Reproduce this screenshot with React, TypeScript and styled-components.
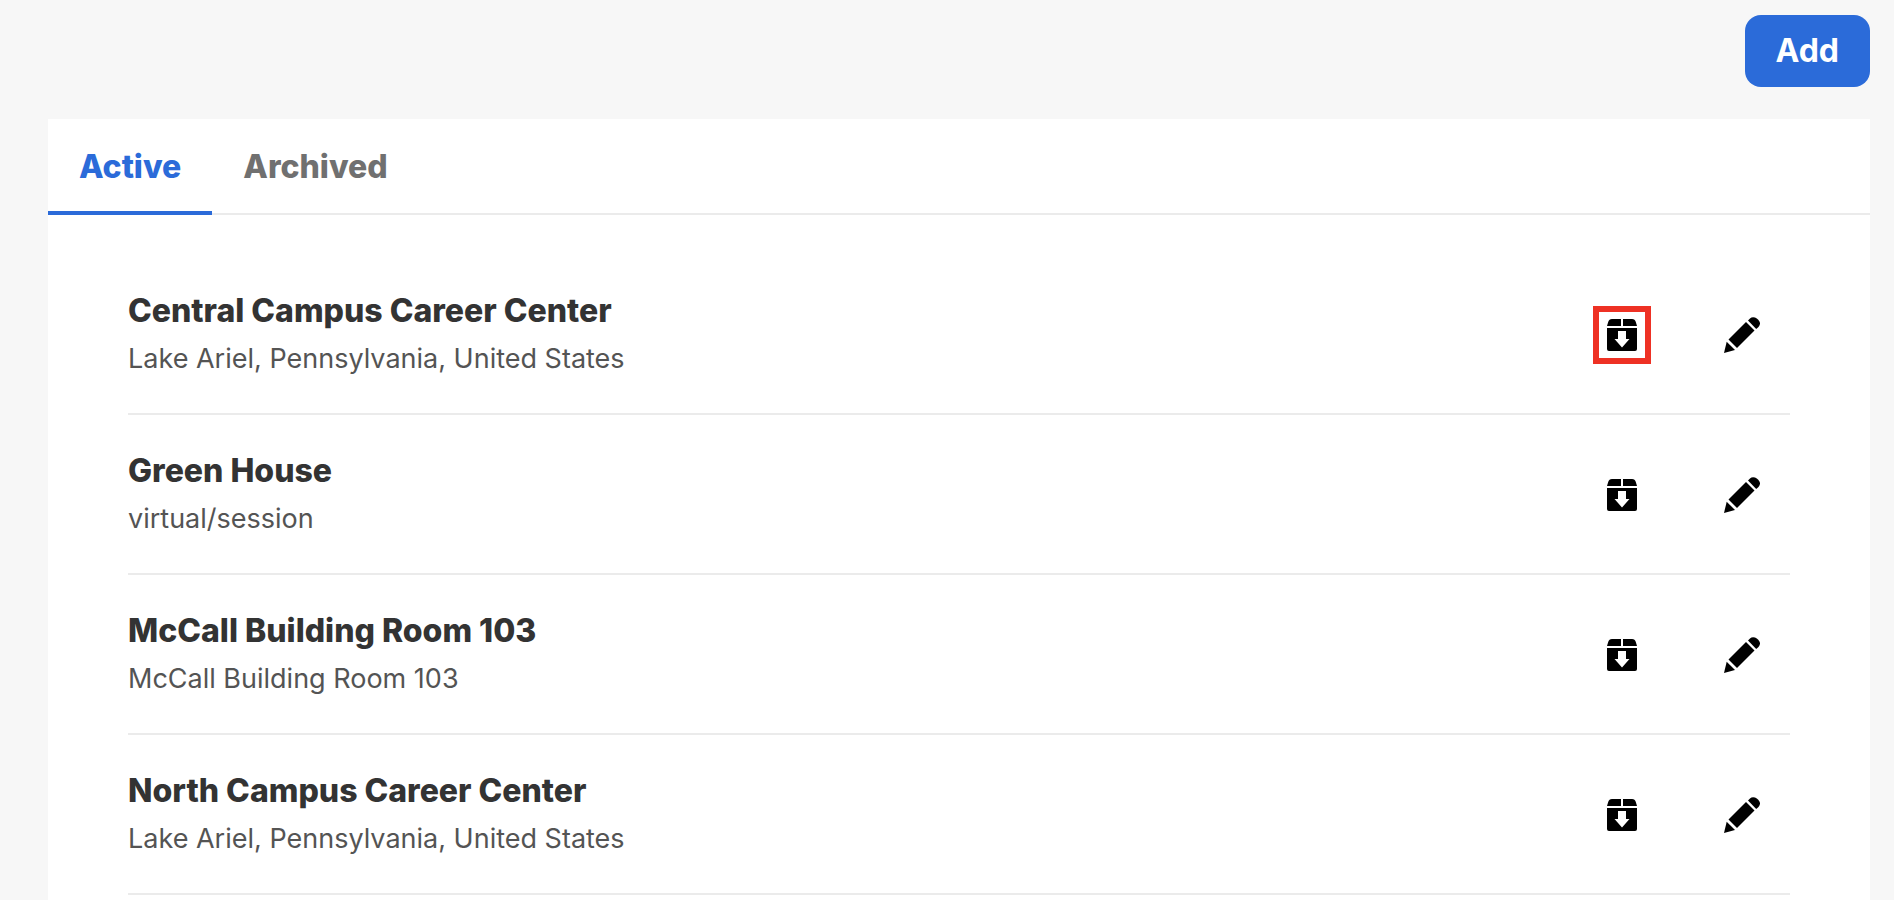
import React, { useState } from "react";
import styled, { createGlobalStyle } from "styled-components";

const GlobalStyle = createGlobalStyle`
  *, *::before, *::after {
    box-sizing: border-box;
  }

  html, body, #root {
    height: 100%;
  }

  body {
    margin: 0;
    overflow: hidden;
    background: #f7f7f7;
    color: #333333;
    font-family: Inter, "Liberation Sans", Arial, sans-serif;
  }
`;

const Page = styled.main`
  height: 100%;
  display: flex;
  flex-direction: column;
  padding: 15px 24px 0 48px;
`;

const Toolbar = styled.header`
  display: flex;
  justify-content: flex-end;
  margin-bottom: 32px;
`;

const AddButton = styled.button`
  height: 72px;
  padding: 0 31px 2px;
  border: 0;
  border-radius: 16px;
  background: #2b6bd9;
  color: #ffffff;
  font: inherit;
  font-size: 32px;
  font-weight: 700;
  cursor: pointer;
`;

const Panel = styled.section`
  flex: 1;
  background: #ffffff;
`;

const TabBar = styled.div`
  display: flex;
  height: 96px;
  box-shadow: inset 0 -2px #ebebeb;
`;

const Tab = styled.button<{ $active: boolean }>`
  padding: 0 31px 2px;
  border: 0;
  background: transparent;
  box-shadow: ${({ $active }) => ($active ? "inset 0 -4px #2b6bd9" : "none")};
  color: ${({ $active }) => ($active ? "#2b6bd9" : "#707070")};
  font: inherit;
  font-size: 32px;
  font-weight: 800;
  cursor: pointer;
`;

const LocationList = styled.ul`
  margin: 0;
  padding: 40px 80px;
  list-style: none;
`;

const LocationRow = styled.li`
  display: flex;
  align-items: center;
  justify-content: space-between;
  padding: 32px 19px 30px 0;
  border-bottom: 2px solid #ebebeb;
`;

const LocationName = styled.h2`
  margin: 0;
  font-size: 32px;
  line-height: 48px;
  font-weight: 800;
`;

const LocationAddress = styled.p`
  margin: 0;
  color: #545454;
  font-size: 27px;
  line-height: 48px;
`;

const Actions = styled.div`
  display: flex;
  gap: 62px;
`;

const IconButton = styled.button<{ $highlighted?: boolean }>`
  display: flex;
  align-items: center;
  justify-content: center;
  width: 58px;
  height: 58px;
  padding: 0;
  border: 6px solid ${({ $highlighted }) => ($highlighted ? "#ee3124" : "transparent")};
  background: transparent;
  color: #000000;
  cursor: pointer;
`;

const ArchiveIcon = () => (
  <svg width="30" height="32" viewBox="0 0 30 32" fill="currentColor" aria-hidden="true">
    <path d="M0 7 1.200 3Q2 0 5 0H14V7Z" />
    <path d="M30 7 28.800 3Q28 0 25 0H16V7Z" />
    <path
      fillRule="evenodd"
      d="M0 9h30v21q0 2-2 2H2q-2 0-2-2ZM11 12v8H7.500L15 28.500 22.500 20H19v-8Z"
    />
  </svg>
);

const PencilIcon = () => (
  <svg width="36" height="36" viewBox="0 0 36 36" fill="currentColor" aria-hidden="true">
    <path d="M24 3.500 26 1.500Q28 -0.500 31 0.500 35 2 36 6 36.200 8 34.500 10L32.200 12Z" />
    <path d="M22 5 30.500 13.500 13 31 4.500 22.500Z" />
    <path d="M2.700 24.700 11 33 0 36Z" />
  </svg>
);

const locations = [
  { name: "Central Campus Career Center", address: "Lake Ariel, Pennsylvania, United States", highlighted: true },
  { name: "Green House", address: "virtual/session" },
  { name: "McCall Building Room 103", address: "McCall Building Room 103" },
  { name: "North Campus Career Center", address: "Lake Ariel, Pennsylvania, United States" },
];

const tabs = ["Active", "Archived"];

export default function App() {
  const [activeTab, setActiveTab] = useState("Active");

  return (
    <>
      <GlobalStyle />
      <Page>
        <Toolbar>
          <AddButton type="button">Add</AddButton>
        </Toolbar>
        <Panel>
          <TabBar role="tablist">
            {tabs.map((tab) => (
              <Tab
                key={tab}
                type="button"
                role="tab"
                aria-selected={tab === activeTab}
                $active={tab === activeTab}
                onClick={() => setActiveTab(tab)}
              >
                {tab}
              </Tab>
            ))}
          </TabBar>
          <LocationList>
            {locations.map(({ name, address, highlighted }) => (
              <LocationRow key={name}>
                <div>
                  <LocationName>{name}</LocationName>
                  <LocationAddress>{address}</LocationAddress>
                </div>
                <Actions>
                  <IconButton type="button" aria-label={`Archive ${name}`} $highlighted={highlighted}>
                    <ArchiveIcon />
                  </IconButton>
                  <IconButton type="button" aria-label={`Edit ${name}`}>
                    <PencilIcon />
                  </IconButton>
                </Actions>
              </LocationRow>
            ))}
          </LocationList>
        </Panel>
      </Page>
    </>
  );
}
